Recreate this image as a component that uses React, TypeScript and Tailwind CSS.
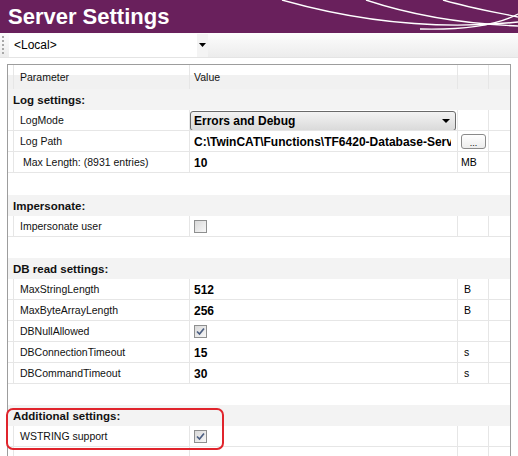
import React from "react";

const line = "border-[#e6e6e6]";

function Check({ checked }: { checked?: boolean }) {
	return (
		<div className="w-[13px] h-[13px] border border-[#8e8f8f] bg-[linear-gradient(135deg,#d9d9d9,#f7f7f7)] flex items-center justify-center">
			{checked && (
				<svg width="9" height="9" viewBox="0 0 9 9">
					<path d="M1 4.5 L3.5 7 L8 1.5" fill="none" stroke="#4c5f82" strokeWidth="1.7" />
				</svg>
			)}
		</div>
	);
}

function Row({
	label,
	children,
	unit,
	labelPad = "pl-[6px]",
	unitPad = "pl-[6px]",
	valuePad = "pl-[4px]",
}: {
	label?: string;
	children?: React.ReactNode;
	unit?: string;
	labelPad?: string;
	unitPad?: string;
	valuePad?: string;
}) {
	return (
		<div className={`grid grid-cols-[6px_176px_268px_31px_21px] h-[21px] border-b ${line}`}>
			<div className={`border-r ${line}`} />
			<div className={`border-r ${line} ${labelPad} pt-[2px] flex items-center text-[10.5px] text-[#111]`}>{label}</div>
			<div className={`border-r ${line} ${valuePad} pt-[1px] flex items-center font-bold text-[12px] whitespace-nowrap overflow-hidden`}>
				{children}
			</div>
			<div className={`border-r ${line} ${unitPad} pt-[2px] flex items-center text-[10.5px]`}>{unit}</div>
			<div />
		</div>
	);
}

function Category({ title, h = "h-[21px]" }: { title: string; h?: string }) {
	return (
		<div className={`${h} bg-[#f3f3f3] pl-[5px] pt-[3px] flex items-center font-bold text-[11.5px] text-[#111]`}>
			{title}
		</div>
	);
}

function Empty({ h = "h-[21px]" }: { h?: string }) {
	return <div className={`${h} bg-white`} />;
}

export default function App() {
	return (
		<div className="relative w-[518px] h-[456px] overflow-hidden bg-white font-['Liberation_Sans',Arial,sans-serif]">
			{/* title bar */}
			<div className="relative h-[33px] bg-[#69205c] flex items-center pl-[8px]">
				<span className="text-white font-bold text-[22px] leading-none">Server Settings</span>
				<svg className="absolute left-0 top-0" width="518" height="33" viewBox="0 0 518 33">
					<g fill="none" stroke="#fff" strokeWidth="1.4">
						<path d="M282,0 C360,22 440,30 518,22" />
						<path d="M366,0 C420,18 470,24 518,26" />
						<path d="M443,0 C470,8 500,13 518,17" />
						<path d="M420,29 C460,30 495,26 518,14" />
					</g>
				</svg>
			</div>

			{/* toolbar */}
			<div className="h-[25px] bg-[linear-gradient(to_bottom,#fdfdfd,#ececec)] flex items-center border-b border-[#e4e4e4]">
				<div className="ml-[2px] w-[2px] h-[18px] border-l-2 border-dotted border-[#a8a8a8]" />
				<div className="ml-[5px] w-[199px] h-[23px] bg-white flex items-center">
					<span className="pl-[5px] text-[12px] text-black flex-1">&lt;Local&gt;</span>
					<div className="w-[11px] h-full bg-[#f4f4f4] flex items-center justify-center">
						<svg width="7" height="4" viewBox="0 0 7 4">
							<path d="M0 0 H7 L3.5 4 Z" fill="#000" />
						</svg>
					</div>
				</div>
			</div>

			{/* property grid */}
			<div className="ml-[7px] mt-[6px] w-[504px] h-[400px] border border-[#9d9d9d]">
				<div className="grid grid-cols-[6px_176px_268px_31px_21px] h-[24px] bg-[linear-gradient(to_bottom,#fff_0,#fff_42%,#f1f1f1_42%,#f1f1f1_100%)] text-[10.5px] text-[#111]">
					<div className={`border-r ${line}`} />
					<div className={`border-r ${line} pl-[6px] pt-[1px] flex items-center`}>Parameter</div>
					<div className={`border-r ${line} pl-[4px] pt-[1px] flex items-center`}>Value</div>
					<div className={`border-r ${line}`} />
					<div />
				</div>

				<Category title="Log settings:" />
				<Row label="LogMode" valuePad="pl-0">
					<div className="w-[266px] h-[20px] rounded-[3px] border border-[#6a6a6a] bg-[linear-gradient(to_bottom,#f3f3f3,#dadada)] flex items-center pl-[3px] pr-[5px]">
						<span className="flex-1">Errors and Debug</span>
						<svg width="8" height="4" viewBox="0 0 8 4">
							<path d="M0 0 H8 L4 4 Z" fill="#000" />
						</svg>
					</div>
				</Row>
				<Row label="Log Path" unitPad="pl-[3px]">
					<span className="w-[257px] overflow-hidden">C:\TwinCAT\Functions\TF6420-Database-Server</span>
				</Row>
				<div className={`grid grid-cols-[6px_176px_268px_31px_21px] h-[21px] -mt-[21px] pointer-events-none`}>
					<div />
					<div />
					<div />
					<div className="col-span-2 flex items-center pl-[3px]">
						<div className="w-[25px] h-[15px] rounded-[3px] border border-[#8a8a8a] bg-[linear-gradient(to_bottom,#fff,#ececec)] flex items-end justify-center text-[9px] leading-[10px]">
							...
						</div>
					</div>
				</div>
				<Row label="Max Length: (8931 entries)" labelPad="pl-[9px]" unit="MB" unitPad="pl-[3px]">
					10
				</Row>
				<Empty h="h-[22px]" />

				<Category title="Impersonate:" />
				<Row label="Impersonate user">
					<Check />
				</Row>
				<Empty />

				<Category title="DB read settings:" />
				<Row label="MaxStringLength" unit="B">512</Row>
				<Row label="MaxByteArrayLength" unit="B">256</Row>
				<Row label="DBNullAllowed">
					<Check checked />
				</Row>
				<Row label="DBConnectionTimeout" unit="s">15</Row>
				<Row label="DBCommandTimeout" unit="s">30</Row>
				<Empty />

				<Category title="Additional settings:" />
				<Row label="WSTRING support">
					<Check checked />
				</Row>
				<Row />
			</div>

			{/* highlight */}
			<div className="absolute left-[6px] top-[408px] w-[218px] h-[42px] border-2 border-[#e0242c] rounded-[7px]" />
		</div>
	);
}
